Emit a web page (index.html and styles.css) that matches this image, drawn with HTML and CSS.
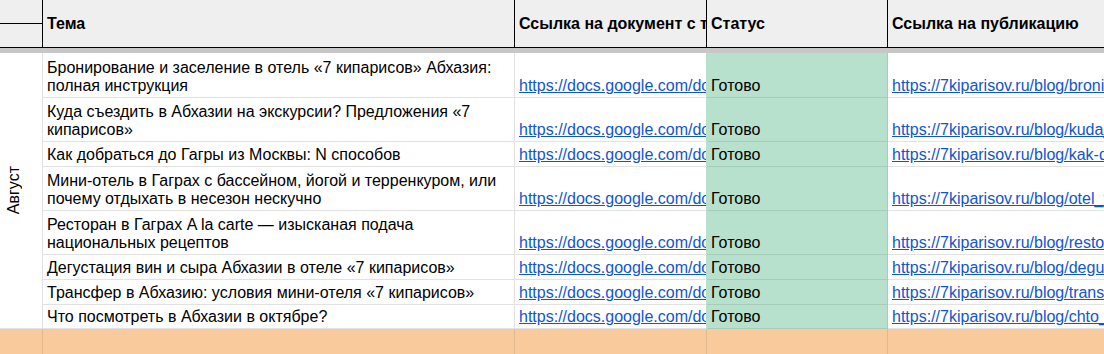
FILE: index.html
```html
<!DOCTYPE html>
<html lang="ru">
<head>
<meta charset="utf-8">
<title>Контент-план</title>
<link rel="stylesheet" href="styles.css">
</head>
<body>
<div class="sheet">
  <div class="cell hd corner"><div class="corner-top"></div><div class="corner-bottom"></div></div>
  <div class="cell hd">Тема</div>
  <div class="cell hd">Ссылка на документ с текстом</div>
  <div class="cell hd">Статус</div>
  <div class="cell hd last">Ссылка на публикацию</div>

  <div class="divider"></div>

  <div class="cell month"><span class="month-text">Август</span></div>

  <div class="cell topic">Бронирование и заселение в отель «7 кипарисов» Абхазия: полная инструкция</div>
  <div class="cell lnk"><a href="#">https://docs.google.com/document/d/1bRn</a></div>
  <div class="cell st">Готово</div>
  <div class="cell last"><a href="#">https://7kiparisov.ru/blog/bronirovanie-i-zaselenie</a></div>

  <div class="cell topic">Куда съездить в Абхазии на экскурсии? Предложения «7 кипарисов»</div>
  <div class="cell lnk"><a href="#">https://docs.google.com/document/d/1kDa</a></div>
  <div class="cell st">Готово</div>
  <div class="cell last"><a href="#">https://7kiparisov.ru/blog/kuda_sezdit</a></div>

  <div class="cell topic">Как добраться до Гагры из Москвы: N способов</div>
  <div class="cell lnk"><a href="#">https://docs.google.com/document/d/1kKd</a></div>
  <div class="cell st">Готово</div>
  <div class="cell last"><a href="#">https://7kiparisov.ru/blog/kak-dobratsya</a></div>

  <div class="cell topic">Мини-отель в Гаграх с бассейном, йогой и терренкуром, или почему отдыхать в несезон нескучно</div>
  <div class="cell lnk"><a href="#">https://docs.google.com/document/d/1mOt</a></div>
  <div class="cell st">Готово</div>
  <div class="cell last"><a href="#">https://7kiparisov.ru/blog/otel_v_gagrah</a></div>

  <div class="cell topic">Ресторан в Гаграх A la carte — изысканая подача национальных рецептов</div>
  <div class="cell lnk"><a href="#">https://docs.google.com/document/d/1rRs</a></div>
  <div class="cell st">Готово</div>
  <div class="cell last"><a href="#">https://7kiparisov.ru/blog/restoran</a></div>

  <div class="cell topic">Дегустация вин и сыра Абхазии в отеле «7 кипарисов»</div>
  <div class="cell lnk"><a href="#">https://docs.google.com/document/d/1dGs</a></div>
  <div class="cell st">Готово</div>
  <div class="cell last"><a href="#">https://7kiparisov.ru/blog/degustaciya</a></div>

  <div class="cell topic">Трансфер в Абхазию: условия мини-отеля «7 кипарисов»</div>
  <div class="cell lnk"><a href="#">https://docs.google.com/document/d/1tTr</a></div>
  <div class="cell st">Готово</div>
  <div class="cell last"><a href="#">https://7kiparisov.ru/blog/transfer</a></div>

  <div class="cell topic">Что посмотреть в Абхазии в октябре?</div>
  <div class="cell lnk"><a href="#">https://docs.google.com/document/d/1cHt</a></div>
  <div class="cell st">Готово</div>
  <div class="cell last"><a href="#">https://7kiparisov.ru/blog/chto_posmotret</a></div>

  <div class="cell or"></div>
  <div class="cell or"></div>
  <div class="cell or"></div>
  <div class="cell or"></div>
  <div class="cell or last"></div>
</div>
</body>
</html>
```

FILE: styles.css
```css
html, body {
  margin: 0;
  padding: 0;
  background: #ffffff;
}

body {
  font-family: "Liberation Sans", Arial, sans-serif;
  font-size: 16px;
  color: #000000;
  overflow: hidden;
}

.sheet {
  display: grid;
  grid-template-columns: 43px 472px 192px 181px 216px;
  grid-template-rows: 48px 5px 45px 44px 25px 44px 44px 25px 25px 24px 25px;
  width: 1104px;
  height: 354px;
  overflow: hidden;
}

.cell {
  box-sizing: border-box;
  border-right: 1px solid #e2e2e2;
  border-bottom: 1px solid #e2e2e2;
  padding: 0 4px 2px 4px;
  display: flex;
  align-items: flex-end;
  overflow: hidden;
  line-height: 18px;
  min-width: 0;
}

.last {
  border-right: none;
}

.hd {
  background: #efefef;
  border-right-color: #000000;
  border-bottom-color: #000000;
  font-weight: bold;
  align-items: center;
  padding: 0 4px;
  white-space: nowrap;
}

.corner {
  flex-direction: column;
  align-items: stretch;
  padding: 0;
}

.corner-top {
  height: 23px;
  border-bottom: 1px solid #000000;
}

.corner-bottom {
  flex: 1;
}

.divider {
  grid-column: 1 / -1;
  background: #c7c7c7;
}

.month {
  grid-row: 3 / 11;
  grid-column: 1;
  align-items: center;
  justify-content: flex-start;
  padding: 0 0 0 5px;
}

.month-text {
  writing-mode: vertical-rl;
  transform: rotate(180deg);
  line-height: 18px;
}

.topic {
  padding-right: 10px;
  padding-bottom: 2px;
}

.lnk {
  border-right-color: #b7e1cd;
}

a {
  color: #1155cc;
  text-decoration: underline;
  white-space: nowrap;
}

.st {
  background: #b7e1cd;
  border-bottom-color: #a6cdb9;
  border-right-color: #a6cdb9;
}

.or {
  background: #f9cb9c;
  border-right-color: #e2b98f;
  border-bottom: none;
}
```
